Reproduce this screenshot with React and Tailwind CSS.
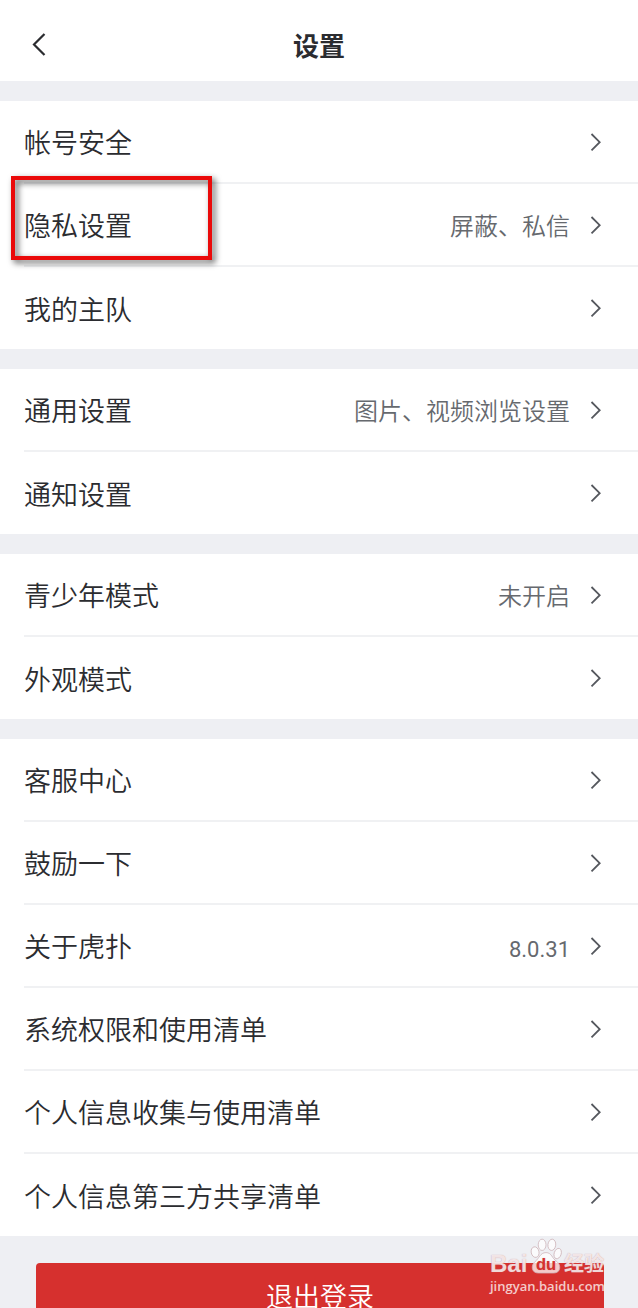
import React from 'react';

const GROUPS = [
  [
    { label: '帐号安全' },
    { label: '隐私设置', value: '屏蔽、私信', marked: true },
    { label: '我的主队' },
  ],
  [
    { label: '通用设置', value: '图片、视频浏览设置' },
    { label: '通知设置' },
  ],
  [
    { label: '青少年模式', value: '未开启' },
    { label: '外观模式' },
  ],
  [
    { label: '客服中心' },
    { label: '鼓励一下' },
    { label: '关于虎扑', value: '8.0.31', numeric: true },
    { label: '系统权限和使用清单' },
    { label: '个人信息收集与使用清单' },
    { label: '个人信息第三方共享清单' },
  ],
];

const Chevron = () => (
  <svg className="w-3 h-5 shrink-0" viewBox="0 0 12 20" fill="none" stroke="#55585e" strokeWidth="1.8">
    <path d="M1.500 2 L9.700 10.200 L1.500 18.400" />
  </svg>
);

const Row = ({ label, value, marked, numeric, last }) => (
  <li className="relative pl-6">
    <a
      href="#"
      className={`flex items-center pr-9 ${last ? 'h-[82px]' : 'h-[83px] border-b-2 border-[#f0f1f3]'}`}
    >
      <span className="flex-1 pt-px text-[27px] leading-10 text-[#2b2c30]">{label}</span>
      {value && (
        <span
          className={`mr-5 text-[#66696e] ${numeric ? "pt-2 font-['Roboto','Noto_Sans_CJK_SC',sans-serif] text-[22px] leading-8 font-normal" : 'text-[24px] leading-8'}`}
        >
          {value}
        </span>
      )}
      <Chevron />
    </a>
    {marked && (
      <span className="pointer-events-none absolute -top-2 left-[11px] z-10 h-[84px] w-[201px] border-4 border-[#ea0a0a] drop-shadow-[3px_3px_3px_rgba(0,0,0,0.65)]" />
    )}
  </li>
);

const Watermark = () => (
  <div className="pointer-events-none absolute right-[34px] bottom-[14px] w-[114px] text-white/75">
    <div className="flex items-end justify-between pb-1 font-['Liberation_Sans','Noto_Sans_CJK_SC',sans-serif] font-bold [text-shadow:0_0_1px_rgba(190,120,125,0.8)]">
      <span className="text-[24px] leading-5">Bai</span>
      <svg className="h-9 w-8 shrink-0" viewBox="0 0 32 37" fill="currentColor" stroke="#cdb3b8" strokeWidth="0.8">
        <ellipse cx="4.800" cy="14.500" rx="4" ry="5.500" transform="rotate(-12 4.800 14.500)" />
        <ellipse cx="12" cy="7" rx="4" ry="5.800" />
        <ellipse cx="22" cy="7" rx="4" ry="5.800" transform="rotate(6 22 7)" />
        <ellipse cx="28" cy="16" rx="3.600" ry="5.500" transform="rotate(18 28 16)" />
        <path d="M16 15 C10 15 9 21 5 24 C0 28 1 36 8 36 H24 C31 36 32 28 27 24 C22 21 22 15 16 15 Z" />
        <text x="16" y="33" textAnchor="middle" fontSize="17" fill="#d6302e" stroke="none">du</text>
      </svg>
      <span className="text-[20px] leading-5">经验</span>
    </div>
    <div className="font-['Open_Sans',sans-serif] text-[13px] leading-4 font-semibold">jingyan.baidu.com</div>
  </div>
);

export default function App() {
  return (
    <div className="relative h-screen overflow-hidden bg-[#eeeff3] font-['Noto_Sans_CJK_SC',sans-serif] font-[350]">
      <div className="h-full overflow-y-auto [scrollbar-width:none]">
        <header className="grid h-[81px] grid-cols-[1fr_auto_1fr] items-center bg-white px-8 pt-2">
          <button type="button" aria-label="返回" className="justify-self-start">
            <svg className="h-6 w-4" viewBox="0 0 16 24" fill="none" stroke="#2b2c30" strokeWidth="2.2">
              <path d="M12.500 1 L2 11.500 L12.500 22" />
            </svg>
          </button>
          <h1 className="text-[26px] leading-10 font-bold text-[#2b2c30]">设置</h1>
        </header>

        <main>
          {GROUPS.map((rows, i) => (
            <ul key={i} className="mt-5 bg-white">
              {rows.map((row, j) => (
                <Row key={row.label} {...row} last={j === rows.length - 1} />
              ))}
            </ul>
          ))}
          <div className="pt-[27px] pr-[34px] pb-10 pl-9">
            <button
              type="button"
              className="h-[66px] w-full rounded-sm bg-[#d6302e] text-[27px] leading-10 text-white"
            >
              退出登录
            </button>
          </div>
        </main>
      </div>
      <Watermark />
    </div>
  );
}
